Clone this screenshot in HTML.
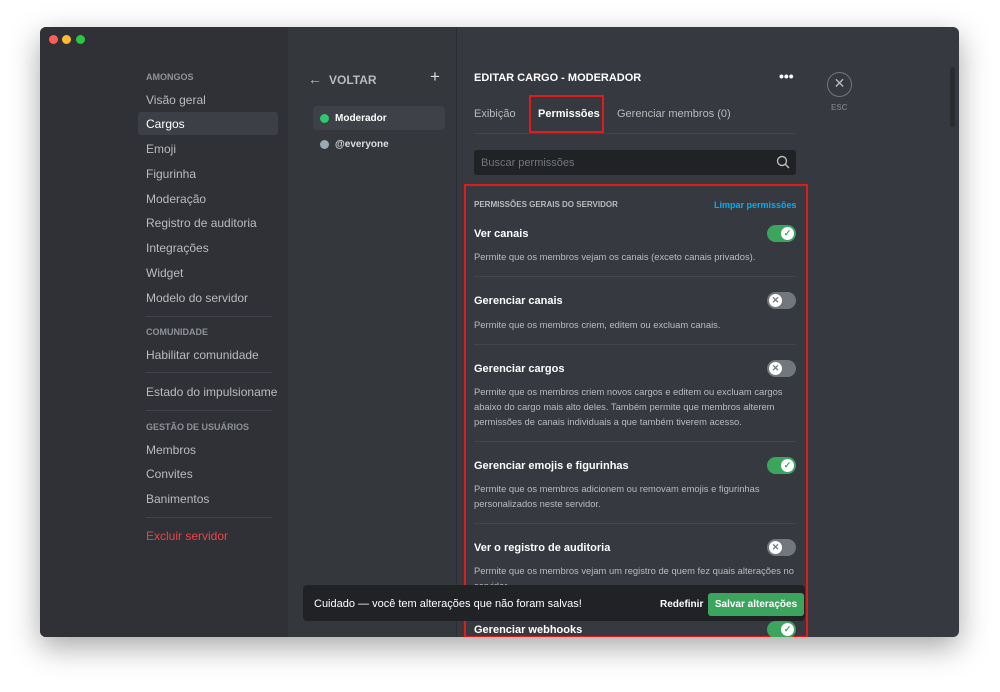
<!DOCTYPE html>
<html><head><meta charset="utf-8"><style>
*{margin:0;padding:0;box-sizing:border-box}
body{width:1000px;height:692px;background:#fff;font-family:"Liberation Sans",sans-serif;position:relative;overflow:hidden}
.win{position:absolute;left:40px;top:27px;width:919px;height:610px;background:#36393f;border-radius:6px;overflow:hidden;box-shadow:0 10px 30px rgba(0,0,0,.35)}
.a{position:absolute;white-space:nowrap}
.side{position:absolute;left:0;top:0;width:248px;height:610px;background:#2f3136}
.mid{position:absolute;left:248px;top:0;width:169px;height:610px;background:#34373c;border-right:1px solid #2c2e33}
.hd{font-size:9px;font-weight:bold;color:#8e9297}
.it{font-size:12px;color:#b9bbbe}
.sep{position:absolute;height:1px;background:#3f4248}
.t{font-size:11px;font-weight:bold;color:#fff}
.d{font-size:9.4px;color:#b9bbbe;line-height:15px;white-space:normal;width:324px}
.tg{position:absolute;width:29px;height:17px;border-radius:9px}
.tg.on{background:#3ba55d}.tg.off{background:#72767d}
.tg i{position:absolute;top:2px;width:13px;height:13px;border-radius:50%;background:#fff;font-style:normal;font-size:9px;font-weight:bold;text-align:center;line-height:13px}
.tg.on i{right:2px;color:#3ba55d}.tg.off i{left:2px;color:#72767d}
</style></head><body>
<div class="win">
<div class="side">
 <div class="a" style="left:9px;top:8px;width:9px;height:9px;border-radius:50%;background:#fd5f57"></div>
 <div class="a" style="left:22px;top:8px;width:9px;height:9px;border-radius:50%;background:#febc2e"></div>
 <div class="a" style="left:36px;top:8px;width:9px;height:9px;border-radius:50%;background:#28c840"></div>
 <div class="a hd" style="left:106px;top:45px">AMONGOS</div>
 <div class="a it" style="left:106px;top:66px">Visão geral</div>
 <div class="a" style="left:98px;top:85px;width:140px;height:23px;background:#3c3f45;border-radius:3px"></div>
 <div class="a it" style="left:106px;top:90px;color:#fff">Cargos</div>
 <div class="a it" style="left:106px;top:115px">Emoji</div>
 <div class="a it" style="left:106px;top:140px">Figurinha</div>
 <div class="a it" style="left:106px;top:165px">Moderação</div>
 <div class="a it" style="left:106px;top:189px">Registro de auditoria</div>
 <div class="a it" style="left:106px;top:214px">Integrações</div>
 <div class="a it" style="left:106px;top:239px">Widget</div>
 <div class="a it" style="left:106px;top:264px">Modelo do servidor</div>
 <div class="sep" style="left:106px;top:289px;width:126px"></div>
 <div class="a hd" style="left:106px;top:300px">COMUNIDADE</div>
 <div class="a it" style="left:106px;top:321px">Habilitar comunidade</div>
 <div class="sep" style="left:106px;top:345px;width:126px"></div>
 <div class="a it" style="left:106px;top:358px;width:132px;overflow:hidden">Estado do impulsionamento</div>
 <div class="sep" style="left:106px;top:383px;width:126px"></div>
 <div class="a hd" style="left:106px;top:395px">GESTÃO DE USUÁRIOS</div>
 <div class="a it" style="left:106px;top:416px">Membros</div>
 <div class="a it" style="left:106px;top:440px">Convites</div>
 <div class="a it" style="left:106px;top:465px">Banimentos</div>
 <div class="sep" style="left:106px;top:490px;width:126px"></div>
 <div class="a it" style="left:106px;top:502px;color:#ed4245">Excluir servidor</div>
</div>
<div class="mid">
 <div class="a" style="left:20px;top:44px;font-size:14px;color:#b9bbbe">←</div>
 <div class="a" style="left:41px;top:46px;font-size:12px;font-weight:bold;color:#b9bbbe">VOLTAR</div>
 <div class="a" style="left:142px;top:40px;font-size:17px;color:#dcddde">+</div>
 <div class="a" style="left:25px;top:79px;width:132px;height:24px;background:#3e4147;border-radius:4px"></div>
 <div class="a" style="left:32px;top:87px;width:9px;height:9px;border-radius:50%;background:#2dc770"></div>
 <div class="a" style="left:47px;top:86px;font-size:10px;font-weight:bold;color:#fff">Moderador</div>
 <div class="a" style="left:32px;top:113px;width:9px;height:9px;border-radius:50%;background:#99aab5"></div>
 <div class="a" style="left:47px;top:112px;font-size:10px;font-weight:bold;color:#dcddde">@everyone</div>
</div>
<div class="a" style="left:434px;top:45px;font-size:11px;font-weight:bold;color:#fff">EDITAR CARGO - MODERADOR</div>
<div class="a" style="left:739px;top:41px;font-size:14px;font-weight:bold;color:#fff">•••</div>
<div class="a" style="left:787px;top:45px;width:25px;height:25px;border:1.5px solid #72767d;border-radius:50%;color:#b9bbbe;font-size:14px;text-align:center;line-height:21px">✕</div>
<div class="a" style="left:791px;top:76px;font-size:8px;font-weight:bold;color:#72767d">ESC</div>
<div class="a" style="left:434px;top:81px;font-size:11px;color:#b9bbbe">Exibição</div>
<div class="a" style="left:498px;top:81px;font-size:11px;font-weight:bold;color:#fff">Permissões</div>
<div class="a" style="left:489px;top:68px;width:75px;height:38px;border:2px solid #e01b1b"></div>
<div class="a" style="left:577px;top:81px;font-size:11px;color:#b9bbbe">Gerenciar membros (0)</div>
<div class="sep" style="left:434px;top:106px;width:322px;background:#42454a"></div>
<div class="a" style="left:434px;top:123px;width:322px;height:25px;background:#202225;border-radius:3px"></div>
<div class="a" style="left:441px;top:130px;font-size:11px;color:#72767d">Buscar permissões</div>
<svg class="a" style="left:736px;top:128px" width="14" height="14" viewBox="0 0 14 14"><circle cx="6" cy="6" r="4.5" fill="none" stroke="#b9bbbe" stroke-width="1.4"/><path d="M9.5 9.5L13 13" stroke="#b9bbbe" stroke-width="1.5"/></svg>
<div class="a" style="left:424px;top:157px;width:344px;height:454px;border:2px solid #e01b1b"></div>
<div class="a" style="left:434px;top:173px;font-size:8px;font-weight:bold;color:#b9bbbe">PERMISSÕES GERAIS DO SERVIDOR</div>
<div class="a" style="left:674px;top:173px;font-size:9px;font-weight:bold;color:#00aff4">Limpar permissões</div>
<div class="a t" style="left:434px;top:201px">Ver canais</div>
<div class="tg on" style="left:727px;top:198px"><i>✓</i></div>
<div class="a d" style="left:434px;top:222px">Permite que os membros vejam os canais (exceto canais privados).</div>
<div class="sep" style="left:434px;top:249px;width:322px;background:#42454a"></div>
<div class="a t" style="left:434px;top:268px">Gerenciar canais</div>
<div class="tg off" style="left:727px;top:265px"><i>✕</i></div>
<div class="a d" style="left:434px;top:290px">Permite que os membros criem, editem ou excluam canais.</div>
<div class="sep" style="left:434px;top:317px;width:322px;background:#42454a"></div>
<div class="a t" style="left:434px;top:336px">Gerenciar cargos</div>
<div class="tg off" style="left:727px;top:333px"><i>✕</i></div>
<div class="a d" style="left:434px;top:357px">Permite que os membros criem novos cargos e editem ou excluam cargos abaixo do cargo mais alto deles. Também permite que membros alterem permissões de canais individuais a que também tiverem acesso.</div>
<div class="sep" style="left:434px;top:414px;width:322px;background:#42454a"></div>
<div class="a t" style="left:434px;top:433px">Gerenciar emojis e figurinhas</div>
<div class="tg on" style="left:727px;top:430px"><i>✓</i></div>
<div class="a d" style="left:434px;top:454px">Permite que os membros adicionem ou removam emojis e figurinhas personalizados neste servidor.</div>
<div class="sep" style="left:434px;top:496px;width:322px;background:#42454a"></div>
<div class="a t" style="left:434px;top:515px">Ver o registro de auditoria</div>
<div class="tg off" style="left:727px;top:512px"><i>✕</i></div>
<div class="a d" style="left:434px;top:536px">Permite que os membros vejam um registro de quem fez quais alterações no servidor.</div>
<div class="a t" style="left:434px;top:597px">Gerenciar webhooks</div>
<div class="tg on" style="left:727px;top:594px"><i>✓</i></div>
<div class="a" style="left:263px;top:558px;width:502px;height:36px;background:#202225;border-radius:4px"></div>
<div class="a" style="left:274px;top:571px;font-size:11px;color:#fff">Cuidado — você tem alterações que não foram salvas!</div>
<div class="a" style="left:620px;top:572px;font-size:10px;font-weight:bold;color:#fff">Redefinir</div>
<div class="a" style="left:668px;top:566px;width:96px;height:23px;background:#3ba55d;border-radius:3px;color:#fff;font-size:10px;font-weight:bold;text-align:center;line-height:23px">Salvar alterações</div>
<div class="a" style="left:910px;top:40px;width:5px;height:60px;background:#2a2c30;border-radius:3px"></div>
</div>
</body></html>
